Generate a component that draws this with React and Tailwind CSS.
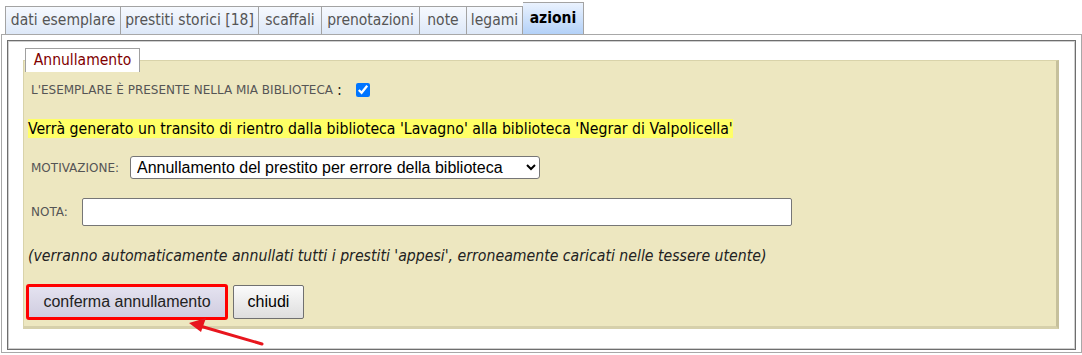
import React from "react";

const TAHOMA = { fontFamily: '"DejaVu Sans Condensed", "DejaVu Sans", sans-serif' };
const LABEL = { fontFamily: '"DejaVu Sans", sans-serif' };

const tabs = [
  { label: "dati esemplare", w: "w-[116px]" },
  { label: "prestiti storici [18]", w: "w-[138px]" },
  { label: "scaffali", w: "w-[63px]" },
  { label: "prenotazioni", w: "w-[98px]" },
  { label: "note", w: "w-[47px]" },
  { label: "legami", w: "w-[56px]" },
];

export default function App() {
  return (
    <div
      className="relative w-[1082px] h-[355px] bg-white overflow-hidden text-[#222]"
      style={TAHOMA}
    >
      {/* tab strip */}
      <div className="flex items-end h-[34px] pl-[5px]">
        {tabs.map((t, i) => (
          <div
            key={t.label}
            className={`${t.w} h-[28px] flex items-center justify-center border-t border-r border-[#a3a3a3] ${
              i === 0 ? "border-l" : ""
            } bg-gradient-to-b from-[#f6f9fe] to-[#dde8f8] text-[15.5px] text-[#555]`}
          >
            {t.label}
          </div>
        ))}
        <div className="w-[61px] h-[32px] flex items-center justify-center border-t border-r border-[#a3a3a3] bg-gradient-to-b from-[#eaf2fe] to-[#b3d1f8] text-[15.5px] font-bold text-black">
          azioni
        </div>
      </div>

      {/* outer frame */}
      <div className="ml-[1px] w-[1081px] border border-[#a8a8a8] pt-[5px] px-[5px] pb-[2px]">
        <div className="border border-[#6e6e6e] shadow-[inset_0_0_0_1px_#cfcfcf] pt-[7px] pl-[15px] pr-[16px] pb-[20px]">
          {/* legend */}
          <div className="relative z-10 ml-[2px] w-[115px] h-[24px] flex items-center justify-center bg-white border-t border-x border-[#a0a0a0] text-[15.5px] text-[#800000]">
            Annullamento
          </div>
          {/* beige panel */}
          <div className="-mt-[12px] bg-[#ede7c0] border-t border-l border-[#d9d3aa] border-r-[3px] border-b-[3px] border-r-[#c6c09c] border-b-[#d6d0ab] pt-[19px] pl-[4px] pb-[6px]">
            <div className="flex items-center h-[20px] pl-[3px]">
              <span className="text-[12px] text-[#555]" style={LABEL}>
                L'ESEMPLARE È PRESENTE NELLA MIA BIBLIOTECA
              </span>
              <span className="text-[16px] ml-[4px]"> :</span>
              <input
                type="checkbox"
                defaultChecked
                className="ml-[14px] w-[14px] h-[14px] accent-[#0075ff]"
              />
            </div>

            <div className="mt-[19px] h-[19px] flex items-center">
              <span className="bg-[#ffff66] text-[15.7px] leading-[19px] text-black">
                Verrà generato un transito di rientro dalla biblioteca 'Lavagno' alla biblioteca 'Negrar di Valpolicella'
              </span>
            </div>

            <div className="mt-[18px] flex items-center h-[23px] pl-[3px]">
              <span className="text-[12px] text-[#555] w-[99px]" style={LABEL}>MOTIVAZIONE:</span>
              <select
                className="w-[410px] h-[23px] border border-[#767676] rounded-[3px] bg-white text-[16px] text-black px-[2px]"
                style={{ fontFamily: '"Liberation Sans", Arial, sans-serif' }}
                defaultValue="a"
              >
                <option value="a">Annullamento del prestito per errore della biblioteca</option>
              </select>
            </div>

            <div className="mt-[19px] flex items-center h-[28px] pl-[3px]">
              <span className="text-[12px] text-[#555] w-[51px]" style={LABEL}>NOTA:</span>
              <input
                type="text"
                className="w-[710px] h-[28px] border border-[#767676] rounded-[2px] bg-white"
              />
            </div>

            <div className="mt-[20px] h-[20px] flex items-center text-[15.7px] italic text-[#222]">
              (verranno automaticamente annullati tutti i prestiti 'appesi', erroneamente caricati nelle tessere utente)
            </div>

            <div
              className="mt-[18px] flex items-center gap-[5px] -ml-[2px]"
              style={{ fontFamily: '"Liberation Sans", Arial, sans-serif' }}
            >
              <button className="w-[202px] h-[36px] border-[3px] border-[#ff0000] rounded-[3px] bg-gradient-to-b from-[#e4e2f0] to-[#d0cde0] text-[16px] text-[#222]">
                conferma annullamento
              </button>
              <button className="w-[71px] h-[34px] border border-[#707070] rounded-[2px] bg-gradient-to-b from-[#fbfbfb] to-[#dedede] text-[16px] text-black">
                chiudi
              </button>
            </div>
          </div>
        </div>
      </div>

      {/* annotation arrow */}
      <svg
        className="absolute left-0 top-0 pointer-events-none"
        width="1082"
        height="355"
      >
        <line x1="262" y1="344" x2="200" y2="326" stroke="#e8161e" strokeWidth="3" strokeLinecap="round" />
        <polygon points="189,323 206,318 201,332" fill="#e8161e" />
      </svg>
    </div>
  );
}
